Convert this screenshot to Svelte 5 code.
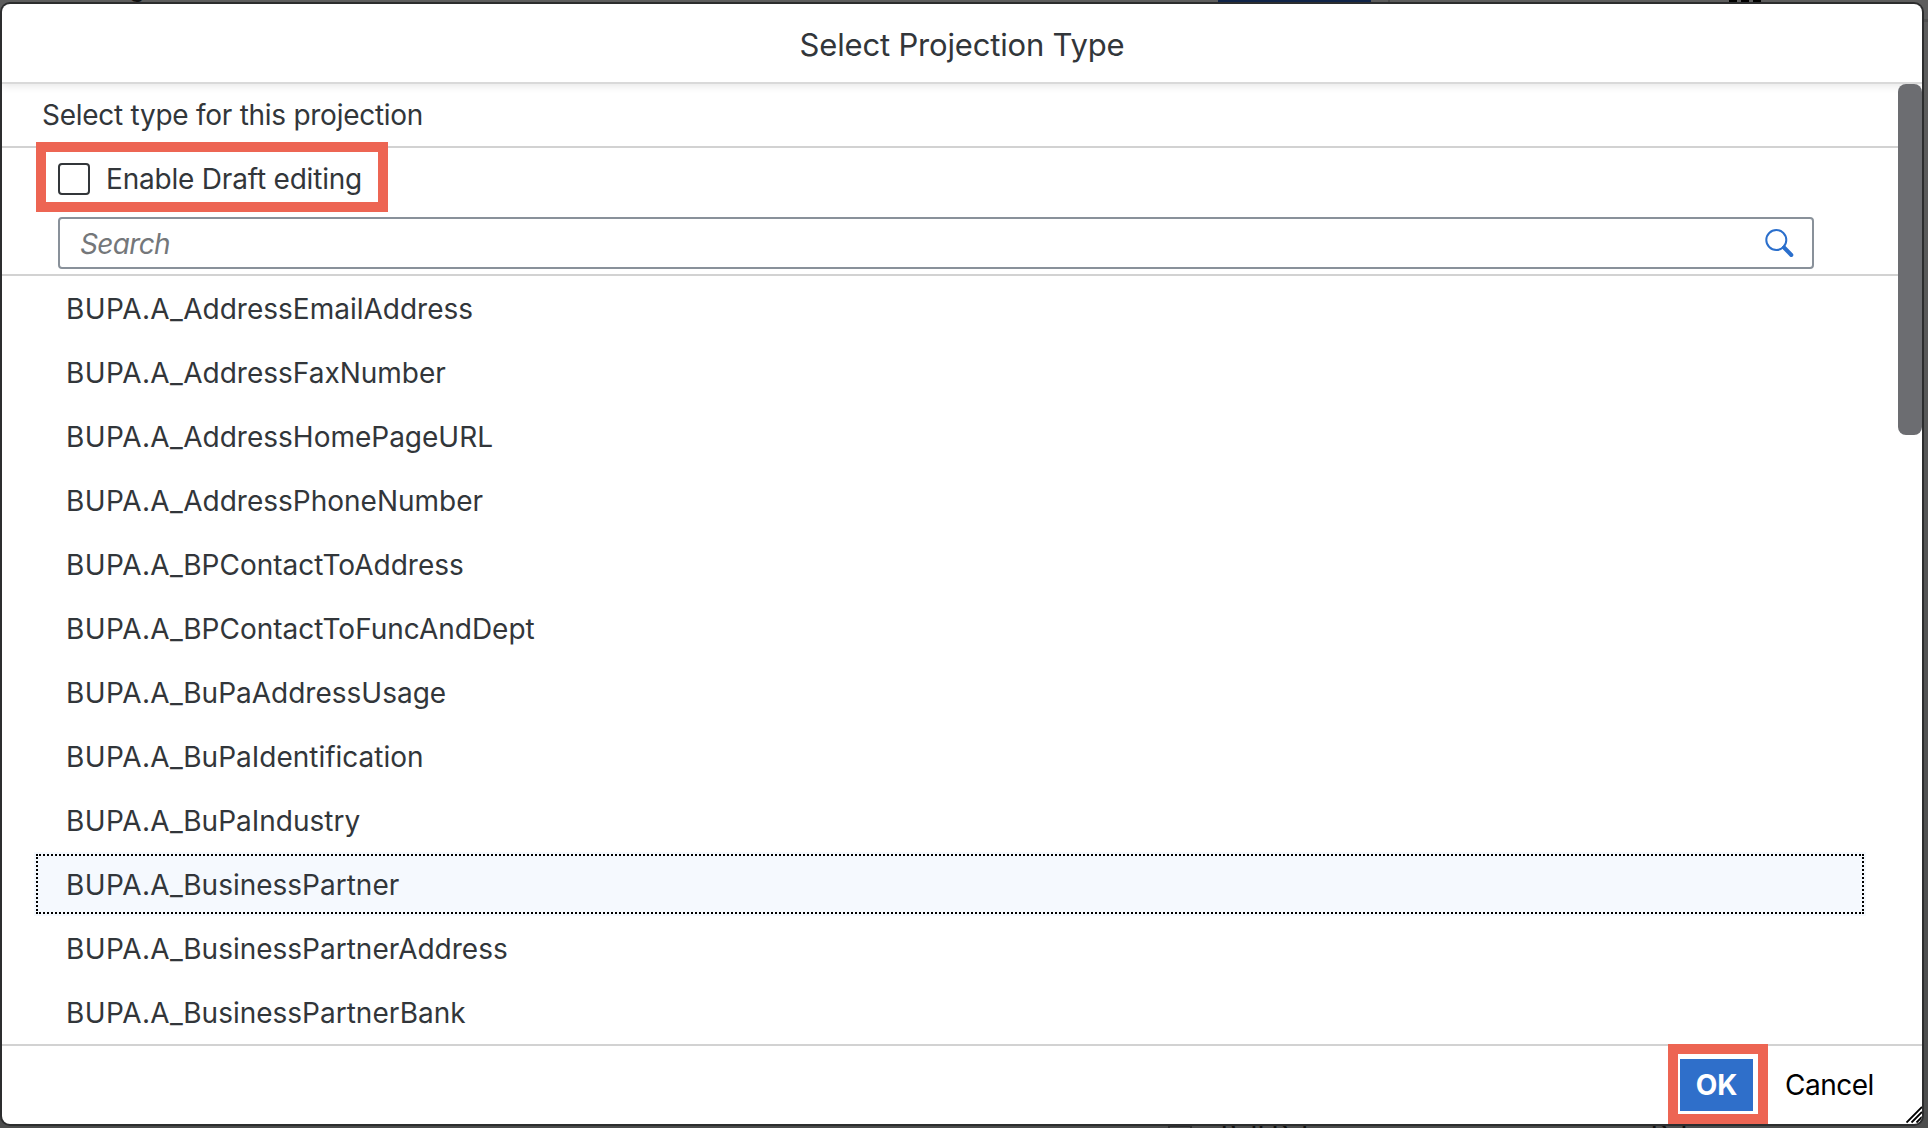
<script>
  const types = [
    'AddressEmailAddress',
    'AddressFaxNumber',
    'AddressHomePageURL',
    'AddressPhoneNumber',
    'BPContactToAddress',
    'BPContactToFuncAndDept',
    'BuPaAddressUsage',
    'BuPaIdentification',
    'BuPaIndustry',
    'BusinessPartner',
    'BusinessPartnerAddress',
    'BusinessPartnerBank',
  ];
  let active = $state('BusinessPartner');
</script>

<div class="page">
  <div class="behind">
    <span class="descender">g</span>
    <span class="tab"></span>
    <span class="divider"></span>
    <span class="dots"><i></i><i></i><i></i></span>
    <span class="edge"></span>
    <span class="box"></span>
    <span class="label birth">BirthDate</span>
    <span class="label date">Date</span>
  </div>

  <div class="dialog">
    <header><h1>Select Projection Type</h1></header>
    <div class="body">
      <main>
        <div class="intro"><span>Select type for this projection</span></div>
        <div class="tools">
          <label class="draft">
            <span class="check"></span>
            <span class="caption">Enable Draft editing</span>
          </label>
          <div class="search">
            <span class="placeholder">Search</span>
            <svg width="30" height="30" viewBox="0 0 30 30" fill="none" stroke="#2b6fcc">
              <circle cx="12.3" cy="12" r="10" stroke-width="2" />
              <path d="M20 19.5 L27.3 27" stroke-width="4" stroke-linecap="round" />
            </svg>
          </div>
        </div>
        <ul>
          {#each types as type}
            <li class:active={type === active}><span><span class="prefix">BUPA.A_</span>{type}</span></li>
          {/each}
        </ul>
      </main>
      <div class="scroll"><div class="thumb"></div></div>
    </div>
    <footer>
      <div class="mark"><button class="ok"><span>OK</span></button></div>
      <button class="cancel"><span>Cancel</span></button>
      <svg class="grip" width="16" height="18" viewBox="0 0 16 18" stroke="#000" stroke-width="1.8">
        <path d="M0.5 16.5 L16 1 M5.5 16.5 L16 6 M10.5 16.5 L16 11" />
      </svg>
    </footer>
  </div>
</div>

<style>
  :global(body) { margin: 0; }
  * { box-sizing: border-box; }
  .page {
    position: relative;
    width: 1928px;
    height: 1128px;
    padding: 4px 6px 4px 2px;
    overflow: hidden;
    background: linear-gradient(#5d5d5d, #4c4d4d);
    font-family: Inter, "Liberation Sans", sans-serif;
    font-size: 28px;
    line-height: 34px;
    color: #32363a;
  }
  .behind { position: absolute; inset: 0; color: #111; }
  .behind > * { position: absolute; }
  .descender { left: 129px; top: -30px; font-size: 26px; }
  .tab { left: 1218px; top: 0; width: 153px; height: 4px; background: #102448; }
  .divider { left: 1388px; top: 0; width: 2px; height: 4px; background: #4c4c4c; }
  .dots { left: 1729px; top: 0; display: flex; gap: 4px; }
  .dots i { width: 8px; height: 2px; background: #000; }
  .edge { right: 0; top: 19px; width: 6px; height: 3px; background: #505050; }
  .box { left: 1168px; top: 1125px; width: 24px; height: 24px; border: 2px solid #2c2d2e; }
  .label { top: 1116px; font-size: 24px; font-weight: 500; letter-spacing: -0.7px; }
  .birth { left: 1221px; }
  .date { left: 1651px; }
  .dialog {
    position: relative;
    display: flex;
    flex-direction: column;
    height: 1120px;
    border-radius: 8px;
    background: #fff;
    box-shadow: 0 0 0 2px #2c2d2e;
    overflow: hidden;
  }
  header {
    position: relative;
    display: flex;
    justify-content: center;
    align-items: center;
    height: 80px;
    border-bottom: 2px solid #d9d9d9;
    box-shadow: 0 2px 8px rgba(0, 0, 0, 0.1);
  }
  h1 { margin: 0; padding-top: 4px; font-size: 31px; font-weight: 400; letter-spacing: -0.18px; }
  .body { display: flex; height: 960px; position: relative; }
  main { flex: 1; }
  .intro {
    display: flex;
    align-items: center;
    height: 64px;
    padding-left: 40px;
    border-bottom: 2px solid #d2d2d2;
    letter-spacing: -0.27px;
  }
  .tools { display: flow-root; height: 128px; border-bottom: 2px solid #d2d2d2; }
  .draft {
    position: relative;
    display: flex;
    align-items: center;
    gap: 16px;
    width: 352px;
    height: 70px;
    margin: -6px 0 0 34px;
    padding: 4px 0 0 12px;
    border: 10px solid #ed6553;
    background: #fff;
  }
  .check { width: 32px; height: 32px; border: 2px solid #32363a; border-radius: 4px; }
  .caption { letter-spacing: -0.2px; white-space: nowrap; }
  .search {
    display: flex;
    align-items: center;
    justify-content: space-between;
    width: 1756px;
    height: 52px;
    margin: 5px 0 0 56px;
    padding: 0 18px 0 20px;
    border: 2px solid #89919a;
    border-radius: 4px;
  }
  .placeholder { padding-top: 2px; font-style: italic; letter-spacing: -0.65px; color: #74777a; }
  ul { margin: 0; padding: 0 32px; list-style: none; }
  li {
    display: flex;
    align-items: center;
    height: 64px;
    padding: 2px 0 0 32px;
  }
  .prefix { letter-spacing: 0.4px; }
  li.active { background: #f5f9fe; outline: 2px dotted #000; outline-offset: -4px; }
  .scroll { width: 24px; }
  .thumb { height: 351px; border-radius: 8px; background: #6c6d71; }
  footer {
    position: relative;
    display: flex;
    justify-content: flex-end;
    height: 80px;
    padding-right: 49px;
    border-top: 2px solid #d2d2d2;
  }
  .mark {
    width: 100px;
    height: 80px;
    margin-top: -2px;
    padding: 5px 5px 0 2px;
    border: 10px solid #ed6553;
    background: #fff;
  }
  button { border: 0; padding: 0; font: inherit; background: none; color: #000; white-space: nowrap; }
  .ok { width: 73px; height: 52px; background: #2f6fca; color: #fff; font-weight: 700; }
  .cancel { width: 87px; margin-left: 17px; margin-right: 1px; letter-spacing: -0.5px; text-align: left; }
  .grip { position: absolute; right: 0; bottom: 0; }
</style>
